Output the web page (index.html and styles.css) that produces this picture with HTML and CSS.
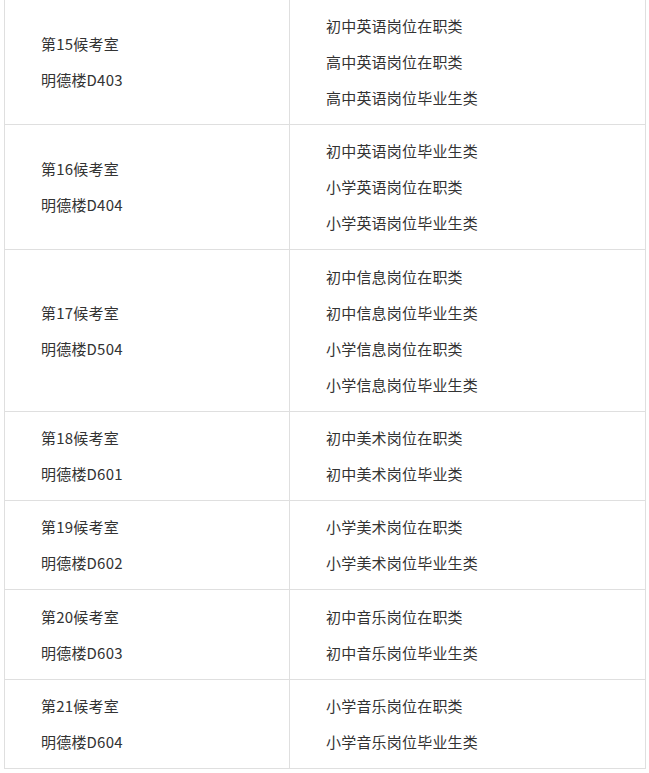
FILE: index.html
```html
<!DOCTYPE html>
<html lang="zh-CN">
<head>
<meta charset="utf-8">
<link rel="stylesheet" href="styles.css">
</head>
<body>
<table class="rooms">
  <tr>
    <td class="room"><div class="ln">第15候考室</div><div class="ln">明德楼D403</div></td>
    <td class="posts"><div class="ln">初中英语岗位在职类</div><div class="ln">高中英语岗位在职类</div><div class="ln">高中英语岗位毕业生类</div></td>
  </tr>
  <tr>
    <td class="room"><div class="ln">第16候考室</div><div class="ln">明德楼D404</div></td>
    <td class="posts"><div class="ln">初中英语岗位毕业生类</div><div class="ln">小学英语岗位在职类</div><div class="ln">小学英语岗位毕业生类</div></td>
  </tr>
  <tr class="loose">
    <td class="room"><div class="ln">第17候考室</div><div class="ln">明德楼D504</div></td>
    <td class="posts"><div class="ln">初中信息岗位在职类</div><div class="ln">初中信息岗位毕业生类</div><div class="ln">小学信息岗位在职类</div><div class="ln">小学信息岗位毕业生类</div></td>
  </tr>
  <tr>
    <td class="room"><div class="ln">第18候考室</div><div class="ln">明德楼D601</div></td>
    <td class="posts"><div class="ln">初中美术岗位在职类</div><div class="ln">初中美术岗位毕业类</div></td>
  </tr>
  <tr>
    <td class="room"><div class="ln">第19候考室</div><div class="ln">明德楼D602</div></td>
    <td class="posts"><div class="ln">小学美术岗位在职类</div><div class="ln">小学美术岗位毕业生类</div></td>
  </tr>
  <tr class="loose">
    <td class="room"><div class="ln">第20候考室</div><div class="ln">明德楼D603</div></td>
    <td class="posts"><div class="ln">初中音乐岗位在职类</div><div class="ln">初中音乐岗位毕业生类</div></td>
  </tr>
  <tr>
    <td class="room"><div class="ln">第21候考室</div><div class="ln">明德楼D604</div></td>
    <td class="posts"><div class="ln">小学音乐岗位在职类</div><div class="ln">小学音乐岗位毕业生类</div></td>
  </tr>
</table>
</body>
</html>
```
FILE: styles.css
```css
html, body {
  margin: 0;
  padding: 0;
  background: #fff;
}
body {
  font-family: "Noto Sans CJK SC", "Microsoft YaHei", sans-serif;
  font-size: 15px;
  color: #333;
}
.rooms {
  border-collapse: collapse;
  width: 642px;
  margin: -1px 0 0 4px;
  table-layout: fixed;
}
.rooms td {
  border: 1px solid #dfdfdf;
  padding: 8px 10px 8px 36px;
  vertical-align: middle;
}
.rooms tr.loose td {
  padding-top: 8.5px;
  padding-bottom: 8.5px;
}
.rooms td.room {
  width: 285px;
  box-sizing: border-box;
}
.ln {
  height: 36px;
  line-height: 36px;
  white-space: nowrap;
  letter-spacing: 0.2px;
}
```
